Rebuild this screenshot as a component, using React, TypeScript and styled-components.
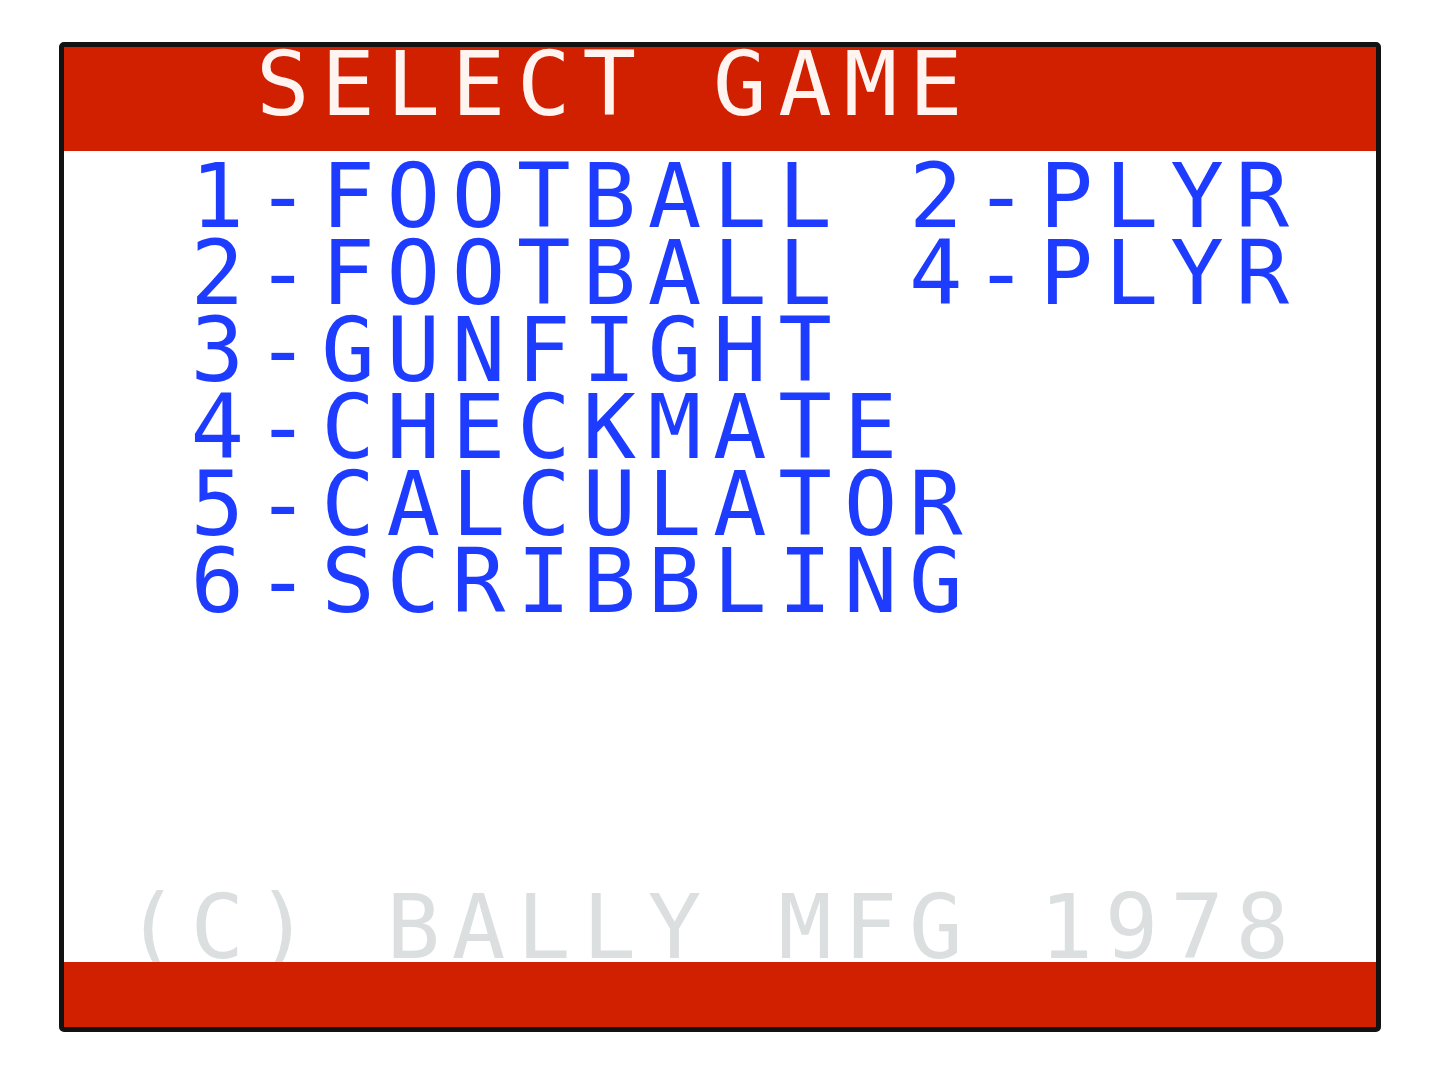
import styled, { createGlobalStyle } from 'styled-components';

const CELL = 65.3;
// DejaVu glyphs sit centred in their advance; pull each line so glyphs start at the cell edge
const BEARING = 4;

const GlobalStyle = createGlobalStyle`
  html, body {
    margin: 0;
    padding: 0;
    background: #ffffff;
  }
`;

const Page = styled.div`
  padding: 42px 0 0 59px;
`;

const Screen = styled.div`
  box-sizing: border-box;
  width: 1322px;
  height: 990px;
  border: 5px solid #121212;
  border-radius: 5px;
  background: #ffffff;
  display: flex;
  flex-direction: column;
  overflow: hidden;
  font-family: 'DejaVu Sans Mono', 'Liberation Mono', monospace;
  font-size: 89px;
  letter-spacing: ${CELL - 0.602 * 89}px;
  white-space: pre;
`;

const TitleBar = styled.header`
  height: 104px;
  background: #d02000;
  color: #fff4f0;
  line-height: 74px;
`;

const Line = styled.div<{ $indent: number }>`
  padding-left: ${({ $indent }) => $indent * CELL - BEARING}px;
`;

const Menu = styled.ul`
  flex: 1;
  list-style: none;
  margin: 0;
  padding: 7px 0 0 0;
  color: #1e3cff;
  line-height: 77px;
`;

const MenuItem = styled.li`
  padding-left: ${2 * CELL - BEARING}px;
`;

const Copyright = styled.footer`
  color: #dcdfdf;
  line-height: 70px;
`;

const BottomBar = styled.div`
  height: 65px;
  background: #d02000;
`;

const games = [
  '1-FOOTBALL 2-PLYR',
  '2-FOOTBALL 4-PLYR',
  '3-GUNFIGHT',
  '4-CHECKMATE',
  '5-CALCULATOR',
  '6-SCRIBBLING',
];

const App: React.FC = () => {
  return (
    <Page>
      <GlobalStyle />
      <Screen>
        <TitleBar>
          <Line $indent={3}>SELECT GAME</Line>
        </TitleBar>
        <Menu>
          {games.map((g) => (
            <MenuItem key={g}>{g}</MenuItem>
          ))}
        </Menu>
        <Copyright>
          <Line $indent={1}>(C) BALLY MFG 1978</Line>
        </Copyright>
        <BottomBar />
      </Screen>
    </Page>
  );
};

export default App;
